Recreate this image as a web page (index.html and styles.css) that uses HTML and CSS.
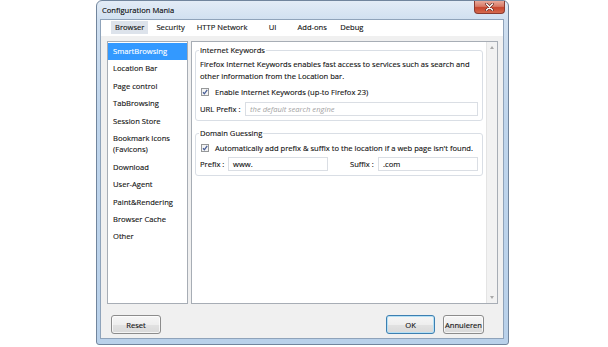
FILE: index.html
```html
<!DOCTYPE html>
<html lang="en">
<head>
    <meta charset="UTF-8">
    <meta name="viewport" content="width=device-width, initial-scale=1.0">
    <title>Configuration Mania</title>
    <link rel="stylesheet" href="styles.css">
</head>
<body>
    <div class="window">
        <!-- title bar -->
        <div class="titlebar">
            <span class="title">Configuration Mania</span>
            <span class="close">
                <svg width="9" height="8" viewBox="0 0 9 8">
                    <path d="M1.5 1 L7.5 7 M7.5 1 L1.5 7" stroke="#5a1d14" stroke-width="2.6" stroke-linecap="round"/>
                    <path d="M1.5 1 L7.5 7 M7.5 1 L1.5 7" stroke="#ffffff" stroke-width="1.5" stroke-linecap="round"/>
                </svg>
            </span>
        </div>

        <div class="client">
            <!-- tabs -->
            <div class="tabs">
                <span class="tab active">Browser</span>
                <span class="tab">Security</span>
                <span class="tab">HTTP Network</span>
                <span class="tab">UI</span>
                <span class="tab">Add-ons</span>
                <span class="tab">Debug</span>
            </div>

            <div class="content">
                <div class="main">
                    <ul class="list">
                        <li class="active">SmartBrowsing</li>
                        <li>Location Bar</li>
                        <li>Page control</li>
                        <li>TabBrowsing</li>
                        <li>Session Store</li>
                        <li>Bookmark Icons<br>(Favicons)</li>
                        <li>Download</li>
                        <li>User-Agent</li>
                        <li>Paint&amp;Rendering</li>
                        <li>Browser Cache</li>
                        <li>Other</li>
                    </ul>

                    <div class="panel">
                        <div class="pane">
                            <fieldset class="group">
                                <legend>Internet Keywords</legend>
                                <p class="desc">Firefox Internet Keywords enables fast access to services such as search and<br>other information from the Location bar.</p>
                                <div class="check first">
                                    <svg class="box" width="8" height="8" viewBox="0 0 8 8">
                                        <rect x="0.5" y="0.5" width="7" height="7" fill="#f4f4f4" stroke="#969899"/>
                                        <path d="M2 4.2 L3.4 5.8 L6.2 1.8" fill="none" stroke="#4a5f97" stroke-width="1.3"/>
                                    </svg>
                                    <span>Enable Internet Keywords (up-to Firefox 23)</span>
                                </div>
                                <div class="field url-row">
                                    <span class="field-label url">URL Prefix :</span>
                                    <span class="input placeholder">the default search engine</span>
                                </div>
                            </fieldset>

                            <fieldset class="group second">
                                <legend>Domain Guessing</legend>
                                <div class="check">
                                    <svg class="box" width="8" height="8" viewBox="0 0 8 8">
                                        <rect x="0.5" y="0.5" width="7" height="7" fill="#f4f4f4" stroke="#969899"/>
                                        <path d="M2 4.2 L3.4 5.8 L6.2 1.8" fill="none" stroke="#4a5f97" stroke-width="1.3"/>
                                    </svg>
                                    <span>Automatically add prefix &amp; suffix to the location if a web page isn't found.</span>
                                </div>
                                <div class="field prefix-row">
                                    <span class="field-label prefix">Prefix :</span>
                                    <span class="input small">www.</span>
                                    <span class="field-label suffix">Suffix :</span>
                                    <span class="input">.com</span>
                                </div>
                            </fieldset>
                        </div>
                        <div class="scrollbar">
                            <span class="arrow up"></span>
                            <span class="arrow down"></span>
                        </div>
                    </div>
                </div>

                <!-- buttons -->
                <div class="footer">
                    <span class="button reset">Reset</span>
                    <span class="button ok">OK</span>
                    <span class="button cancel">Annuleren</span>
                </div>
            </div>
        </div>
    </div>
</body>
</html>
```

FILE: styles.css
```css
body {
    margin: 0;
    background-color: #ffffff;
    font-family: "Open Sans", "Liberation Sans", sans-serif;
    font-size: 7.6px;
    color: #111111;
    -webkit-text-stroke: 0.12px #111111;
}

.window {
    margin-left: 96px;
    width: 413px;
    height: 345px;
    box-sizing: border-box;
    border: 1px solid #71859d;
    border-radius: 6px 6px 3px 3px;
    background: linear-gradient(to bottom, #e3ecf6 0, #cfdff0 20px, #bfd5ec 120px, #b9d1ea 100%);
    padding: 0 4px 5px 3px;
    display: flex;
    flex-direction: column;
}

.titlebar {
    height: 18px;
    display: flex;
    align-items: center;
}
.title {
    padding-left: 2px;
    color: #000;
}
.close {
    margin-left: auto;
    margin-right: -1px;
    align-self: flex-start;
    width: 31px;
    height: 13px;
    box-sizing: border-box;
    border: 1px solid #8a3a30;
    border-top: none;
    border-radius: 0 0 4px 4px;
    background: linear-gradient(to bottom, #e9a99a 0, #d77a66 45%, #c7452d 55%, #d56a4e 100%);
    display: flex;
    align-items: center;
    justify-content: center;
}

.client {
    flex: 1;
    display: flex;
    flex-direction: column;
    background-color: #f0f0f0;
    border: 1px solid #8fa3ba;
}

/* tab strip */
.tabs {
    height: 16px;
    background-color: #ffffff;
    display: flex;
    padding-left: 10px;
}
.tab {
    margin-top: 1px;
    height: 13px;
    line-height: 13px;
    padding: 0 4px;
    margin-right: 4px;
    min-width: 26px;
    text-align: center;
}
.tab.active {
    background-color: #dde3eb;
}

.content {
    flex: 1;
    display: flex;
    flex-direction: column;
    padding: 5px 5px 0 6px;
}
.main {
    height: 263px;
    display: flex;
    gap: 3px;
}

/* category list */
.list {
    width: 81px;
    box-sizing: border-box;
    margin: 0;
    padding: 1px 0 0 0;
    list-style: none;
    background-color: #ffffff;
    border: 1px solid #a7adb5;
}
.list li {
    padding: 3px 0 3px 5px;
    line-height: 11.4px;
}
.list li.active {
    background-color: #3399ff;
    color: #ffffff;
    -webkit-text-stroke: 0.12px #ffffff;
}

/* settings panel */
.panel {
    flex: 1;
    display: flex;
    background-color: #ffffff;
    border: 1px solid #a7adb5;
}
.pane {
    flex: 1;
    padding: 2px 3px 0 3px;
}
.group {
    margin: 0;
    min-width: 0;
    border: 1px solid #d9dee5;
    border-radius: 3px;
    padding: 2px 4px 4px 4px;
}
.group.second {
    margin-top: 6px;
}
.group legend {
    padding: 0 1px;
    margin-left: -1px;
    line-height: 12px;
}
.desc {
    margin: 0;
    line-height: 12px;
}
.check {
    display: flex;
    align-items: center;
    height: 12px;
    margin-top: 1px;
}
.check.first {
    margin-top: 4px;
}
.check .box {
    margin-left: 1px;
    margin-right: 6px;
}
.field {
    display: flex;
    align-items: center;
    height: 14px;
    margin-top: 3px;
}
.url-row {
    margin-top: 4px;
}
.field-label.url {
    width: 45px;
}
.field-label.prefix {
    width: 28px;
}
.field-label.suffix {
    margin-left: 22px;
    width: 28px;
}
.input {
    flex: 1;
    height: 14px;
    box-sizing: border-box;
    border: 1px solid #dadee4;
    padding: 0 4px;
    line-height: 12px;
    background-color: #ffffff;
}
.input.small {
    flex: none;
    width: 100px;
}
.placeholder {
    color: #a3a3a3;
    -webkit-text-stroke: 0;
    font-style: italic;
}

/* scroll bar */
.scrollbar {
    width: 10px;
    background-color: #f2f2f2;
    border-left: 1px solid #e4e4e4;
    display: flex;
    flex-direction: column;
    justify-content: space-between;
    align-items: center;
    padding: 4px 0;
}
.arrow {
    width: 0;
    height: 0;
    border-left: 2.5px solid transparent;
    border-right: 2.5px solid transparent;
}
.arrow.up {
    border-bottom: 3px solid #a9a9a9;
}
.arrow.down {
    border-top: 3px solid #a9a9a9;
}

/* dialog buttons */
.footer {
    display: flex;
    padding: 11px 14px 0 4px;
}
.button {
    height: 19px;
    box-sizing: border-box;
    border: 1px solid #8c8c8c;
    border-radius: 3px;
    background: linear-gradient(to bottom, #f6f6f6 0, #eeeeee 50%, #e2e2e2 51%, #d9d9d9 100%);
    box-shadow: inset 0 0 0 1px rgba(255, 255, 255, 0.7);
    display: flex;
    align-items: center;
    justify-content: center;
}
.button.reset {
    width: 50px;
}
.button.ok {
    margin-left: auto;
    width: 49px;
    border-color: #3c7fb1;
    box-shadow: inset 0 0 0 1px #b5e0f5;
}
.button.cancel {
    margin-left: 8px;
    width: 41px;
}
```
